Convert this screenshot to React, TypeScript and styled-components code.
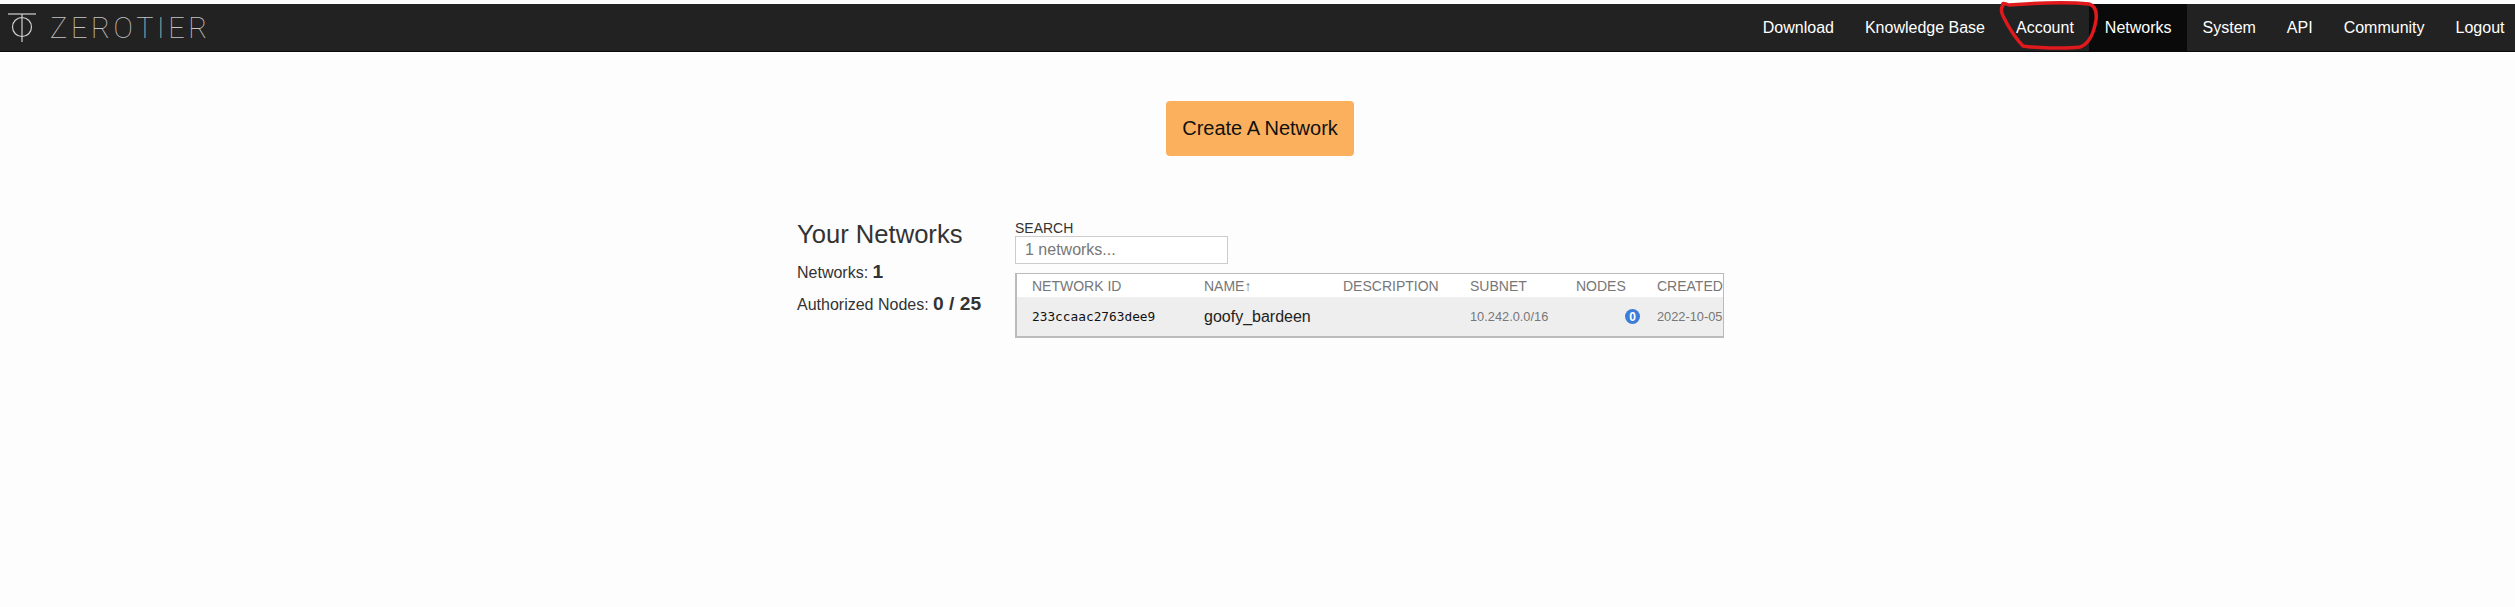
import type { FC, ReactElement } from "react";
import styled, { createGlobalStyle } from "styled-components";

const navItems = ["Download", "Knowledge Base", "Account", "Networks", "System", "API", "Community", "Logout"];

const columns = "172px 139px 127px 106px 81px 1fr";

const GlobalStyle = createGlobalStyle`
  html, body {
    margin: 0;
    padding: 0;
    background: #fdfdfd;
    overflow: hidden;
  }
  body {
    font-family: "Liberation Sans", Arial, sans-serif;
    color: #333;
  }
`;

const Page = styled.div`
  width: 2520px;
  min-height: 607px;
  padding-top: 4px;
  position: relative;
`;

const NavBar = styled.header`
  display: flex;
  justify-content: space-between;
  align-items: stretch;
  height: 47px;
  background: #222;
  border-bottom: 1px solid #0a0a0a;
`;

const Brand = styled.a`
  display: flex;
  align-items: center;
  gap: 12px;
  padding-left: 8px;
`;

const BrandName = styled.span`
  font-family: "Roboto", "Liberation Sans", sans-serif;
  font-weight: 100;
  font-size: 29px;
  letter-spacing: 3.6px;
  color: #c4c4c4;
`;

const NavList = styled.nav`
  display: flex;
  align-items: stretch;
`;

const NavLink = styled.a<{ $active?: boolean }>`
  display: flex;
  align-items: center;
  padding: 0 15.5px;
  font-size: 16px;
  color: #fff;
  background: ${({ $active }) => ($active ? "#0a0a0a" : "transparent")};
`;

const Scribble = styled.svg`
  position: absolute;
  left: 1985px;
  top: 0;
  pointer-events: none;
`;

const Main = styled.main`
  display: flex;
  flex-direction: column;
  align-items: center;
  padding-top: 49px;
`;

const CreateButton = styled.button`
  width: 188px;
  height: 55px;
  border: 0;
  border-radius: 4px;
  background: #fbb05d;
  color: #111;
  font-family: inherit;
  font-size: 20px;
`;

const Content = styled.section`
  display: flex;
  align-items: flex-start;
  width: 926px;
  margin-top: 60px;
`;

const Summary = styled.aside`
  width: 218px;
  flex: none;
`;

const Title = styled.h2`
  margin: 0 0 11px;
  padding-top: 3px;
  font-size: 25.6px;
  font-weight: 400;
  line-height: 30px;
`;

const Stat = styled.p`
  margin: 0 0 7px;
  font-size: 16px;
  line-height: 24px;

  strong {
    font-size: 19.2px;
    font-weight: 700;
  }
`;

const Results = styled.div`
  flex: 1;
`;

const SearchLabel = styled.label`
  display: block;
  font-size: 14px;
  line-height: 16px;
  padding-top: 4px;
`;

const SearchInput = styled.input`
  display: block;
  box-sizing: border-box;
  width: 213px;
  height: 28px;
  padding: 0 9px;
  border: 1px solid #ccc;
  background: #fff;
  font-family: inherit;
  font-size: 16px;

  &::placeholder {
    color: #777;
    opacity: 1;
  }
`;

const Table = styled.div`
  margin-top: 9px;
  border: 1px solid #bbb;
  border-bottom-width: 2px;
  border-left-width: 2px;
`;

const HeaderRow = styled.div`
  display: grid;
  grid-template-columns: ${columns};
  align-items: center;
  height: 23px;
  padding-left: 15px;
  background: #fff;
  font-size: 14px;
  color: #777;
`;

const DataRow = styled.div`
  display: grid;
  grid-template-columns: ${columns};
  align-items: center;
  height: 39px;
  padding-left: 15px;
  background: #eee;
`;

const NetworkId = styled.span`
  font-family: "DejaVu Sans Mono", monospace;
  font-size: 12.8px;
  color: #111;
`;

const NetworkName = styled.span`
  font-size: 16px;
  color: #222;
`;

const Muted = styled.span`
  font-size: 12.8px;
  color: #777;
`;

const NodesCell = styled.span`
  display: flex;
  justify-content: flex-end;
  padding-right: 17px;
`;

const Badge = styled.span`
  display: flex;
  align-items: center;
  justify-content: center;
  width: 15px;
  height: 15px;
  border-radius: 50%;
  background: #3b7dd8;
  color: #fff;
  font-size: 12px;
  font-weight: 700;
`;

const App: FC = (): ReactElement => (
    <Page>
        <GlobalStyle />
        <NavBar>
            <Brand>
                <svg width="30" height="30" viewBox="0 0 30 30" fill="none" stroke="#d0d0d0" strokeWidth="1.2">
                    <path d="M0 1h28" />
                    <path d="M14 1v28" />
                    <circle cx="14" cy="14" r="9.5" />
                </svg>
                <BrandName>ZEROTIER</BrandName>
            </Brand>
            <NavList>
                {navItems.map(item => (
                    <NavLink key={item} $active={item === "Networks"}>{item}</NavLink>
                ))}
            </NavList>
        </NavBar>
        <Scribble width="130" height="60" viewBox="0 0 130 60" fill="none">
            <path d="M18 5C17 3 19 3 24 5C50 3 85 2 104 4C111 6 112 12 111 20C109 32 104 44 95 47C80 49 50 48 38 46C32 40 24 28 18 16C16 12 16 8 18 5Z"
                  stroke="#e0191c" strokeWidth="3.5" strokeLinejoin="round" />
        </Scribble>
        <Main>
            <CreateButton>Create A Network</CreateButton>
            <Content>
                <Summary>
                    <Title>Your Networks</Title>
                    <Stat>Networks: <strong>1</strong></Stat>
                    <Stat>Authorized Nodes: <strong>0 / 25</strong></Stat>
                </Summary>
                <Results>
                    <SearchLabel>SEARCH</SearchLabel>
                    <SearchInput placeholder="1 networks..." />
                    <Table>
                        <HeaderRow>
                            <span>NETWORK ID</span>
                            <span>NAME↑</span>
                            <span>DESCRIPTION</span>
                            <span>SUBNET</span>
                            <span>NODES</span>
                            <span>CREATED</span>
                        </HeaderRow>
                        <DataRow>
                            <NetworkId>233ccaac2763dee9</NetworkId>
                            <NetworkName>goofy_bardeen</NetworkName>
                            <span />
                            <Muted>10.242.0.0/16</Muted>
                            <NodesCell><Badge>0</Badge></NodesCell>
                            <Muted>2022-10-05</Muted>
                        </DataRow>
                    </Table>
                </Results>
            </Content>
        </Main>
    </Page>
);

export default App;
